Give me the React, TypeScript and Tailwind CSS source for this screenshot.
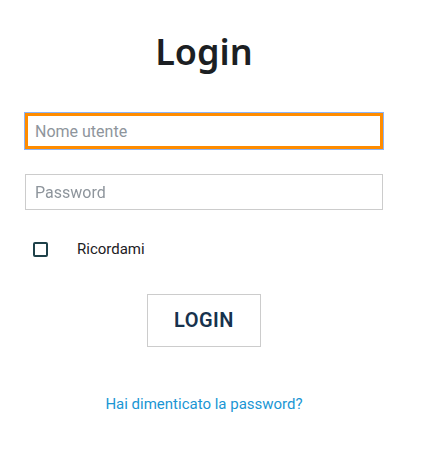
import { useState } from 'react';

export default function App() {
  const [remember, setRemember] = useState(false);

  return (
    <div className="min-h-[458px] w-[421px] bg-white font-['Roboto',sans-serif]">
      <div className="ml-[25px] flex w-[358px] flex-col pt-[28px]">
        <h1 className="text-center font-['Noto_Sans',sans-serif] text-[36px] font-semibold leading-[48px] text-[#1c1f23]">
          Login
        </h1>

        <input
          autoFocus
          type="text"
          placeholder="Nome utente"
          className="mt-[37px] h-[36px] w-full border-[3px] border-[#ff8c00] px-[7px] text-[16px] text-[#333] outline outline-1 outline-[#8ab4f8] placeholder:text-[#8e959c]"
        />

        <input
          type="password"
          placeholder="Password"
          className="mt-[25px] h-[36px] w-full border border-[#cccccc] px-[9px] text-[16px] text-[#333] outline-none placeholder:text-[#8e959c]"
        />

        <label className="mt-[28px] flex cursor-pointer items-center">
          <span
            onClick={() => setRemember(!remember)}
            className="ml-[8px] flex h-[15px] w-[15px] items-center justify-center rounded-[2px] border-2 border-[#1e4149]"
          >
            {remember && <span className="h-[7px] w-[7px] bg-[#1e4149]" />}
          </span>
          <span className="ml-[29px] text-[15px] text-[#1c2024]">Ricordami</span>
        </label>

        <div className="mt-[33px] flex justify-center">
          <button className="h-[53px] w-[114px] border border-[#cccccc] bg-white text-[20px] font-semibold tracking-[0.5px] text-[#17324d]">
            LOGIN
          </button>
        </div>

        <a href="#" className="mt-[46px] text-center text-[15px] text-[#1a96d4]">
          Hai dimenticato la password?
        </a>
      </div>
    </div>
  );
}
